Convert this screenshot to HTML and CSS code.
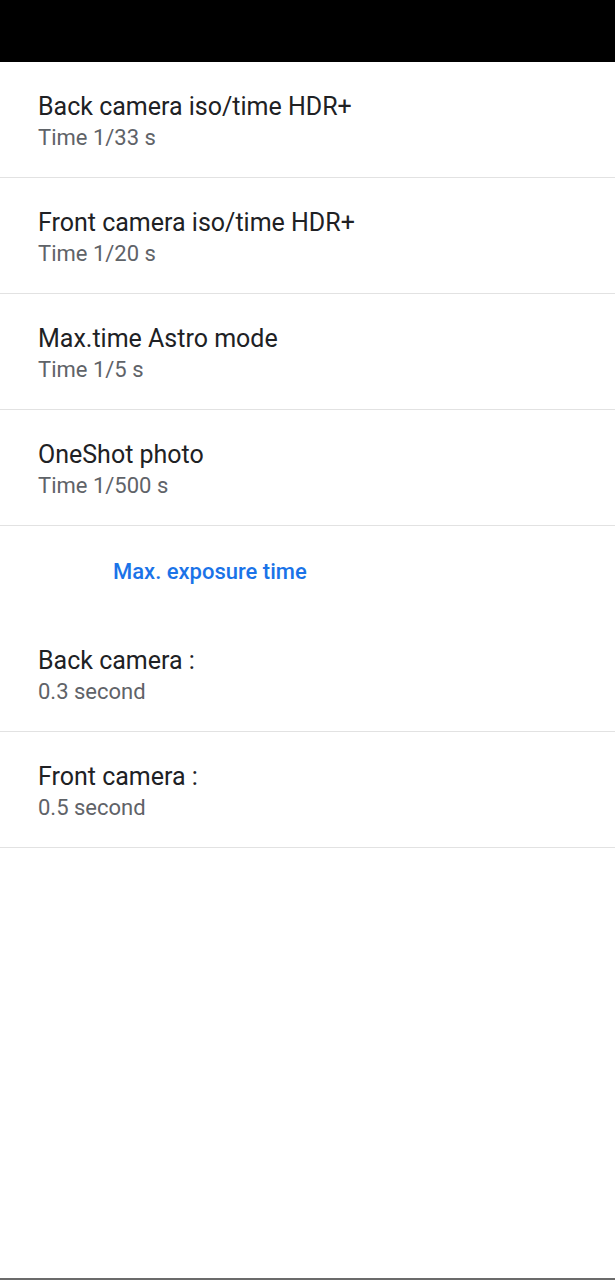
FILE: index.html
```html
<!DOCTYPE html>
<html>
<head>
<meta charset="utf-8">
<link rel="stylesheet" href="styles.css">
</head>
<body>
<div class="page">
  <div class="statusbar"></div>
  <div class="list">
    <div class="item">
      <div class="title">Back camera iso/time HDR+</div>
      <div class="summary">Time 1/33 s</div>
    </div>
    <div class="item">
      <div class="title">Front camera iso/time HDR+</div>
      <div class="summary">Time 1/20 s</div>
    </div>
    <div class="item">
      <div class="title">Max.time Astro mode</div>
      <div class="summary">Time 1/5 s</div>
    </div>
    <div class="item">
      <div class="title">OneShot photo</div>
      <div class="summary">Time 1/500 s</div>
    </div>
    <div class="category">Max. exposure time</div>
    <div class="item">
      <div class="title">Back camera :</div>
      <div class="summary">0.3 second</div>
    </div>
    <div class="item">
      <div class="title">Front camera :</div>
      <div class="summary">0.5 second</div>
    </div>
  </div>
  <div class="navedge"></div>
</div>
</body>
</html>
```
FILE: styles.css
```css
html, body {
  margin: 0;
  padding: 0;
  background: #ffffff;
}
.page {
  display: flex;
  flex-direction: column;
  min-height: 1280px;
  font-family: Roboto, "Liberation Sans", sans-serif;
}
.statusbar {
  height: 62px;
  background: #000000;
}
.list {
  display: flex;
  flex-direction: column;
}
.item {
  height: 115px;
  box-sizing: content-box;
  border-bottom: 1px solid #e2e2e2;
  padding: 0 38px;
  display: flex;
  flex-direction: column;
}
.title {
  margin-top: 30px;
  font-size: 25px;
  line-height: 30px;
  color: #202124;
}
.summary {
  font-size: 22px;
  line-height: 32px;
  color: #5f6368;
}
.category {
  height: 89px;
  padding-top: 1px;
  padding-left: 113px;
  font-size: 22px;
  font-weight: 500;
  color: #1a73e8;
  line-height: 89px;
}
.navedge {
  margin-top: auto;
  height: 2px;
  background: #6b6b6b;
}
```
